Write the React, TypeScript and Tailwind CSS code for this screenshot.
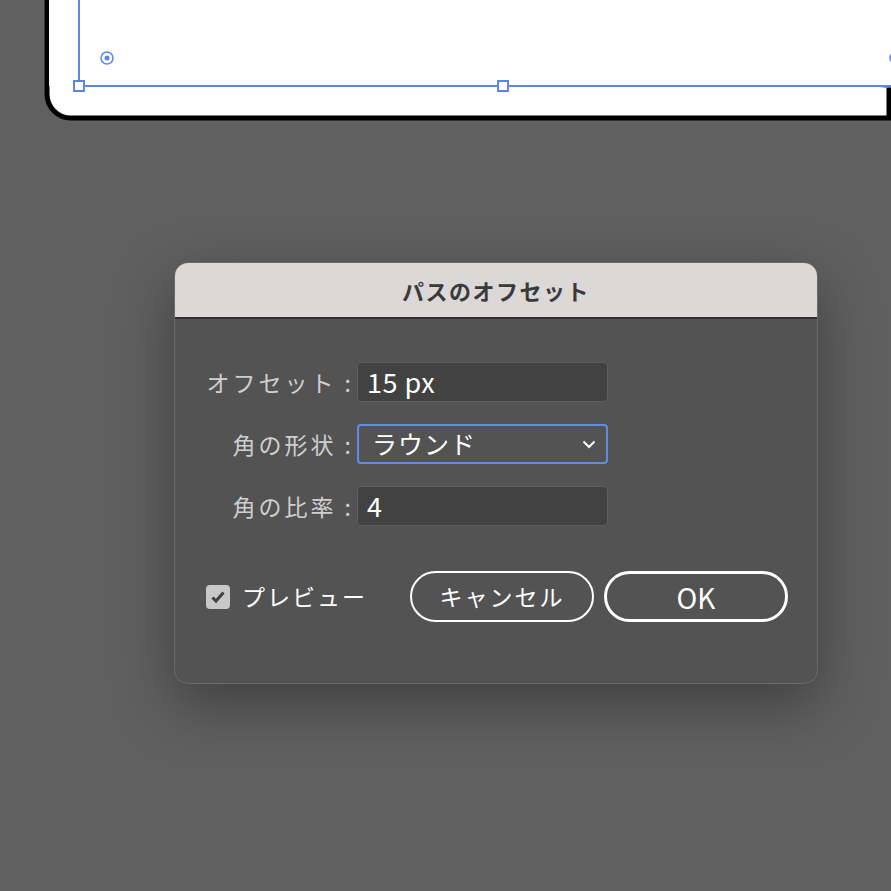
import React from 'react';

const font = { fontFamily: '"Noto Sans CJK JP", "Noto Sans", sans-serif' };

function Artboard() {
  return (
    <svg className="absolute left-0 top-0" width="891" height="130" viewBox="0 0 891 130">
      <path d="M47 0 V94 A24 24 0 0 0 71 118 H889 V88" fill="#ffffff" stroke="#000000" strokeWidth="5" />
      <rect x="49" y="0" width="842" height="86" fill="#ffffff" />
      <path d="M79 0 V86 H891" fill="none" stroke="#5b86e3" strokeWidth="2" />
      <rect x="74" y="81" width="10" height="10" fill="#ffffff" stroke="#5b86e3" strokeWidth="2" />
      <rect x="498" y="81" width="10" height="10" fill="#ffffff" stroke="#5b86e3" strokeWidth="2" />
      <circle cx="107" cy="58" r="6" fill="none" stroke="#5b86e3" strokeWidth="1.5" />
      <circle cx="107" cy="58" r="2.5" fill="#5b86e3" />
      <circle cx="896" cy="58" r="6" fill="none" stroke="#5b86e3" strokeWidth="1.5" />
    </svg>
  );
}

function Field({ label, children, active }: { label: string; children: React.ReactNode; active?: boolean }) {
  return (
    <div className="flex items-center h-[40px]">
      <div className="w-[182px] text-right text-[23px] tracking-[3px] text-[#cfcfcf] pr-[3px] leading-none">{label} :</div>
      <div
        className={
          active
            ? 'flex items-center justify-between w-[251px] h-[40px] rounded-[4px] border-2 border-[#5b8de0] bg-[#535353] pl-[13px] pr-[10px] text-[25px] tracking-[1px] text-white'
            : 'flex items-center w-[251px] h-[40px] rounded-[4px] border border-[#5f5f5f] bg-[#424242] pl-[9px] text-[27px] tracking-[0.5px] text-white'
        }
      >
        {children}
      </div>
    </div>
  );
}

export default function App() {
  return (
    <div className="relative w-[891px] h-[891px] bg-[#606060] overflow-hidden" style={font}>
      <Artboard />
      <div className="absolute left-[174px] top-[262px] w-[644px] h-[422px] rounded-[14px] bg-[#535353] border border-[#6a6a6a] shadow-[0_20px_60px_rgba(0,0,0,0.35)] overflow-hidden flex flex-col">
        <div className="h-[56px] bg-[#dcd8d8] border-b-2 border-[#2e2e2e] flex items-center justify-center text-[22px] tracking-[1.5px] font-bold text-[#3a3a3a]">
          パスのオフセット
        </div>
        <div className="flex flex-col gap-[22px] pt-[43px]">
          <Field label="オフセット">15 px</Field>
          <Field label="角の形状" active>
            <span>ラウンド</span>
            <svg width="14" height="9" viewBox="0 0 14 9">
              <path d="M1.5 1.5 L7 7 L12.5 1.5" fill="none" stroke="#ffffff" strokeWidth="2" />
            </svg>
          </Field>
          <Field label="角の比率">4</Field>
        </div>
        <div className="flex items-center pt-[45px] pl-[31px]">
          <div className="flex items-center gap-[12px] w-[204px]">
            <div className="w-[24px] h-[24px] rounded-[4px] bg-[#c8c8c8] flex items-center justify-center">
              <svg width="16" height="14" viewBox="0 0 16 14">
                <path d="M2.5 7.5 L6 11 L13.5 2.5" fill="none" stroke="#3f3f3f" strokeWidth="3" />
              </svg>
            </div>
            <span className="text-[23px] tracking-[2px] text-white">プレビュー</span>
          </div>
          <button className="w-[184px] h-[51px] rounded-full border-2 border-white text-[23px] tracking-[2px] text-white flex items-center justify-center">
            キャンセル
          </button>
          <button className="ml-[10px] w-[184px] h-[51px] rounded-full border-[3px] border-white text-[28px] text-white flex items-center justify-center">
            OK
          </button>
        </div>
      </div>
    </div>
  );
}
